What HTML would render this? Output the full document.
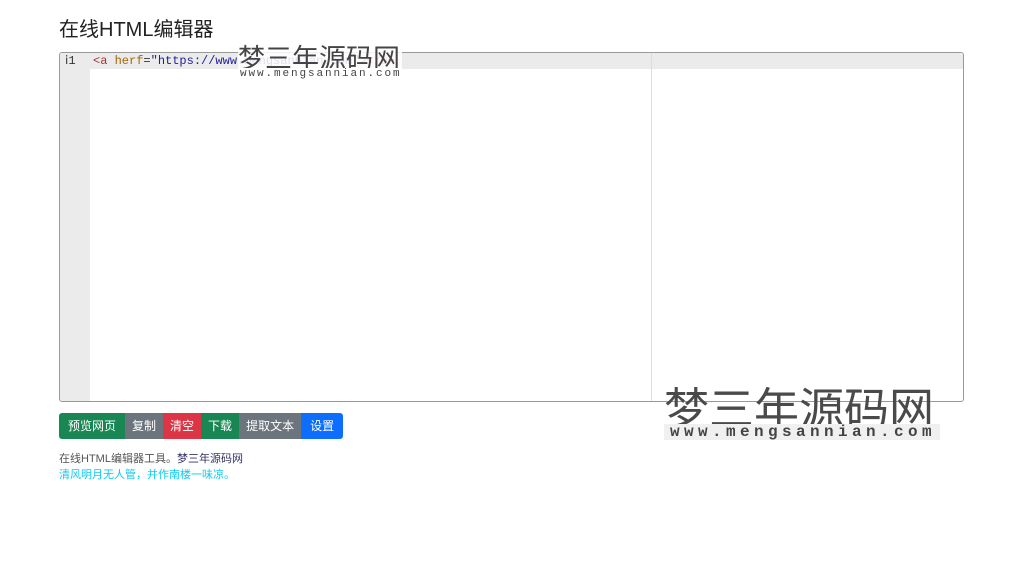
<!DOCTYPE html>
<html><head><meta charset="utf-8"><style>
body{margin:0;background:#fff;font-family:"Liberation Sans","Noto Sans CJK SC",sans-serif;width:1024px;height:575px;overflow:hidden;position:relative}
.a{position:absolute}
h1{position:absolute;left:59px;top:17px;margin:0;font-size:20px;font-weight:normal;color:#222;line-height:26px}
.ed{left:59px;top:52px;width:903px;height:348px;border:1px solid #999;border-radius:3px;overflow:hidden}
.gut{left:0;top:0;width:30px;height:100%;background:#ebebeb}
.line{left:0;top:0;width:100%;height:16px;background:#ebebeb}
.code{left:33px;top:0;font-family:"Liberation Mono",monospace;font-size:12px;line-height:16px;color:#333}
.split{left:591px;top:0;width:1px;height:100%;background:#ddd}
.btns{left:59px;top:413px;display:flex;height:26px}
.btns span{color:#fff;font-size:12px;line-height:26px;padding:0 7px}
.wm{font-family:"Noto Sans CJK SC",sans-serif;color:#555}
</style></head><body>
<h1>在线HTML编辑器</h1>
<div class="a ed">
<div class="a line"></div>
<div class="a gut"></div>
<div class="a" style="left:5px;top:0;font-size:12px;line-height:16px;color:#333;font-family:'Liberation Mono',monospace">ⅰ1</div>
<div class="a code"><span style="color:#a33">&lt;a</span> <span style="color:#a60">herf</span>=<span style="color:#229">"https://www.</span><span style="color:#229">mengsannian.com"</span><span style="color:#a33">&gt;&lt;/a&gt;</span></div>
<div class="a split"></div>
</div>
<div class="a wm" style="left:238px;top:42px;font-size:27px;line-height:30px;color:#444;background:rgba(255,255,255,.85);padding-right:2px">梦三年源码网</div>
<div class="a" style="left:240px;top:68px;font-family:'Liberation Mono',monospace;font-size:11px;letter-spacing:1.9px;color:#444;background:#fff;line-height:12px">www.mengsannian.com</div>
<div class="a wm" style="left:664px;top:380px;font-size:45px;line-height:52px;color:#4a4a4a">梦三年源码网</div>
<div class="a" style="left:664px;top:424px;width:276px;height:16px;background:#f0f0f0;font-family:'Liberation Mono',monospace;font-size:16px;font-weight:bold;letter-spacing:4.4px;color:#444;line-height:16px;padding-left:6px;box-sizing:border-box;white-space:nowrap;overflow:hidden">www.mengsannian.com</div>
<div class="a btns">
<span style="background:#198754;border-radius:3px 0 0 3px;padding:0 9px">预览网页</span>
<span style="background:#6c757d">复制</span>
<span style="background:#dc3545">清空</span>
<span style="background:#198754">下载</span>
<span style="background:#6c757d">提取文本</span>
<span style="background:#0d6efd;border-radius:0 3px 3px 0;padding:0 9px">设置</span>
</div>
<div class="a" style="left:59px;top:452px;font-size:11px;line-height:15px;color:#555">在线HTML编辑器工具。<span style="color:#336">梦三年源码网</span></div>
<div class="a" style="left:59px;top:468px;font-size:11px;line-height:15px;color:#0dcaf0">清风明月无人管，并作南楼一味凉。</div>
</body></html>
